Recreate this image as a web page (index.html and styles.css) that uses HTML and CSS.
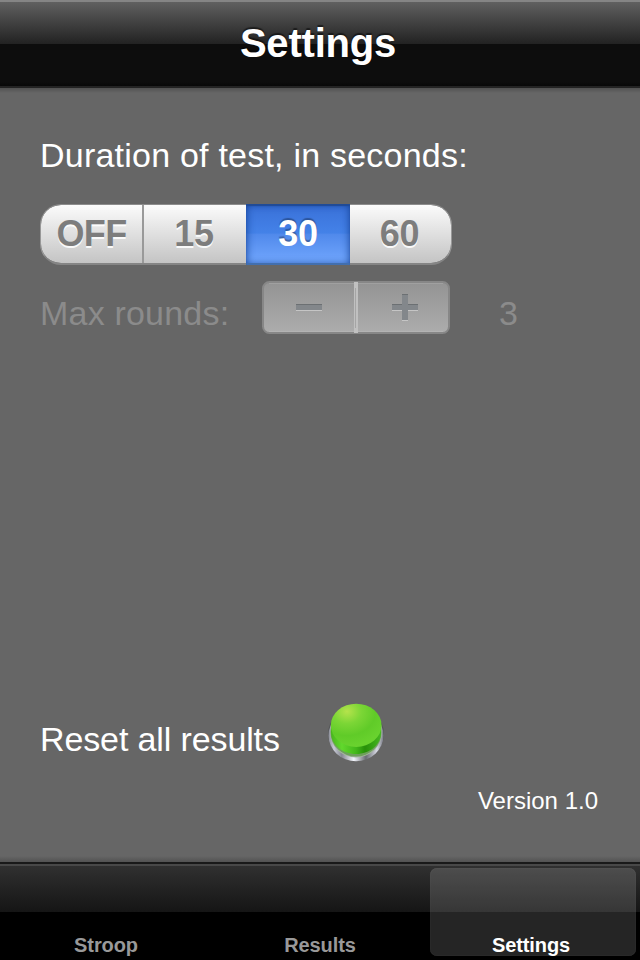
FILE: index.html
```html
<!DOCTYPE html>
<html lang="en">
<head>
<meta charset="utf-8">
<title>Settings</title>
<link rel="stylesheet" href="styles.css">
</head>
<body>
<div class="screen">
  <header class="navbar"><h1 class="title">Settings</h1></header>
  <main class="content">
    <p class="label duration">Duration of test, in seconds:</p>
    <div class="segments">
      <button class="segment">OFF</button>
      <button class="segment">15</button>
      <button class="segment selected">30</button>
      <button class="segment">60</button>
    </div>
    <div class="rounds">
      <span class="label rounds-label">Max rounds:</span>
      <div class="stepper">
        <svg width="188" height="54" viewBox="0 0 188 54">
          <defs>
            <linearGradient id="step" x1="0" y1="0" x2="0" y2="1">
              <stop offset="0" stop-color="#939393"/>
              <stop offset="1" stop-color="#adadad"/>
            </linearGradient>
          </defs>
          <rect x="1" y="2" width="186" height="51" rx="6.5" fill="url(#step)" stroke="#878787" stroke-width="2"/>
          <path d="M7 3.5H181" stroke="#a0a0a0" stroke-width="1"/>
          <path d="M7 51.5H181" stroke="#b3b3b3" stroke-width="1"/>
          <rect x="92" y="2" width="4" height="51" fill="#c0c0c0"/>
          <rect x="93" y="8" width="1" height="40" fill="#a5a5a5"/>
          <path d="M34 29h26v2H34z" fill="#c5c5c5"/>
          <path d="M34 24h26v6H34z" fill="#83878b"/>
          <path d="M34 24h26v1H34z" fill="#6c7073"/>
          <path d="M130 29h26v2H130zM140 40h6v1h-6z" fill="#c5c5c5"/>
          <path d="M140 14h6v10h10v6h-10v10h-6v-10h-10v-6h10z" fill="#83878b"/>
          <path d="M140 14h6v1h-6zM130 24h10v1h-10zM146 24h10v1h-10z" fill="#6c7073"/>
        </svg>
      </div>
      <span class="label rounds-value">3</span>
    </div>
    <div class="reset">
      <span class="label reset-label">Reset all results</span>
      <svg class="push" width="60" height="62" viewBox="0 0 60 62">
        <defs>
          <linearGradient id="rim" x1="0" y1="0" x2="1" y2="0">
            <stop offset="0" stop-color="#8a8c95"/>
            <stop offset=".1" stop-color="#c8cad6"/>
            <stop offset=".24" stop-color="#868892"/>
            <stop offset=".46" stop-color="#f2f4fb"/>
            <stop offset=".68" stop-color="#696b72"/>
            <stop offset=".88" stop-color="#d7d9e4"/>
            <stop offset="1" stop-color="#777982"/>
          </linearGradient>
          <linearGradient id="side" x1="0" y1="0" x2="1" y2="0">
            <stop offset="0" stop-color="#48b51d"/>
            <stop offset=".22" stop-color="#62d82d"/>
            <stop offset=".5" stop-color="#43b81a"/>
            <stop offset=".68" stop-color="#279009"/>
            <stop offset="1" stop-color="#47b821"/>
          </linearGradient>
          <radialGradient id="cap" cx=".32" cy=".18" r=".8">
            <stop offset="0" stop-color="#b5e34c"/>
            <stop offset=".35" stop-color="#7cd636"/>
            <stop offset=".7" stop-color="#60cb28"/>
            <stop offset="1" stop-color="#69d22e"/>
          </radialGradient>
        </defs>
        <ellipse cx="30" cy="33" rx="28" ry="26.5" fill="#55575a"/>
        <ellipse cx="30" cy="34.500" rx="27.500" ry="25.800" fill="url(#rim)"/>
        <ellipse cx="30" cy="31.500" rx="26" ry="25" fill="#a4b59f"/>
        <ellipse cx="30" cy="31" rx="25.500" ry="24.500" fill="#6ea05b"/>
        <path d="M5 25v6.500c0 12 11 21.500 25 21.500s25-9.500 25-21.500v-6.500z" fill="url(#side)"/>
        <ellipse cx="30.200" cy="24.300" rx="25.400" ry="21.600" fill="url(#cap)"/>
      </svg>
    </div>
    <p class="version">Version 1.0</p>
  </main>
  <nav class="tabbar">
    <a class="tab">Stroop</a>
    <a class="tab">Results</a>
    <a class="tab active">Settings</a>
  </nav>
</div>
</body>
</html>
```

FILE: styles.css
```css
* { box-sizing: border-box; }
body { margin: 0; font-family: "Liberation Sans", Arial, sans-serif; color: #fff; }
h1, p { margin: 0; }
.screen { width: 640px; height: 960px; display: flex; flex-direction: column; overflow: hidden; background: #666; }
.navbar {
  height: 88px;
  border-top: 2px solid #858585;
  border-bottom: 2px solid #232323;
  background: linear-gradient(#606060 0, #222 42px, #0d0d0d 42px, #0d0d0d 80px, #080808 84px);
  text-align: center;
}
.title { font-size: 40px; line-height: 46px; padding: 18px 4px 0 0; letter-spacing: -.2px; text-shadow: 0 -2px 1px rgba(0,0,0,.5); }
.content {
  flex: 1;
  padding: 47px 40px 0;
  background:
    linear-gradient(#525252, #666) top / 100% 5px no-repeat,
    linear-gradient(#666, #525252) bottom / 100% 6px no-repeat,
    #666;
}
.label { font-size: 34px; line-height: 40px; white-space: nowrap; }
.duration { margin-bottom: 29px; letter-spacing: .22px; }
.segments {
  display: flex;
  width: 412px;
  height: 61px;
  border: 1px solid #989898;
  border-top-color: #8c8c8c;
  border-bottom: 2px solid #858585;
  border-radius: 21px;
  background: linear-gradient(#fbfbfb, #c4c4c4) padding-box;
}
.segment {
  flex: 1;
  padding: 0 2px 1px 0;
  border: 0;
  background: none;
  color: #7d7d7d;
  font: bold 36px "Liberation Sans", Arial, sans-serif;
  letter-spacing: -.3px;
  text-shadow: 0 2px 0 rgba(255,255,255,.9);
}
.segment:first-child { flex: 0 0 103px; padding: 0 0 1px; border-right: 2px solid #999; letter-spacing: -.6px; }
.segment:nth-child(2) { flex: 0 0 102px; }
.segment.selected {
  flex: 0 0 104px;
  margin: -1px 0 -2px;
  padding: 0 0 2px;
  color: #fff;
  text-shadow: 0 -2px 1px rgba(0,0,0,.3);
  background: linear-gradient(#3970d8, #4482e8 48%, #5089eb 49%, #74a9ff);
  box-shadow: inset 0 2px 1px #204b96, inset 0 -2px 0 #426fae, inset 0 0 8px #123f91;
}
.rounds { display: flex; margin-top: 15px; height: 54px; }
.rounds-label { width: 222px; padding-top: 13px; color: #8b8b8b; letter-spacing: .2px; }
.stepper { width: 188px; height: 54px; }
.rounds-value { margin-left: 49px; padding-top: 13px; color: #8b8b8b; }
.reset { display: flex; margin-top: 367px; height: 62px; }
.reset-label { width: 286px; padding-top: 18px; letter-spacing: -.12px; }
.version { margin-top: 24px; padding-right: 2px; text-align: right; font-size: 24px; line-height: 28px; }
.tabbar {
  display: flex;
  gap: 8px;
  height: 98px;
  padding: 2px 4px 4px;
  border-top: 2px solid #191919;
  background: linear-gradient(#484848 0, #484848 2px, #303030 2px, #151515 48px, #000 48px);
}
.tab {
  flex: 1;
  margin-top: 2px;
  padding: 66px 0 0;
  border-radius: 7px;
  color: #999;
  font-size: 20px;
  font-weight: bold;
  line-height: 22px;
  letter-spacing: -.1px;
  text-align: center;
}
.tab:nth-child(2) { padding-left: 2px; }
.tab.active { flex: 0 0 206px; padding: 66px 4px 0 0; color: #fff; background: rgba(255,255,255,.145); box-shadow: inset 0 0 1px rgba(255,255,255,.2); }
```
